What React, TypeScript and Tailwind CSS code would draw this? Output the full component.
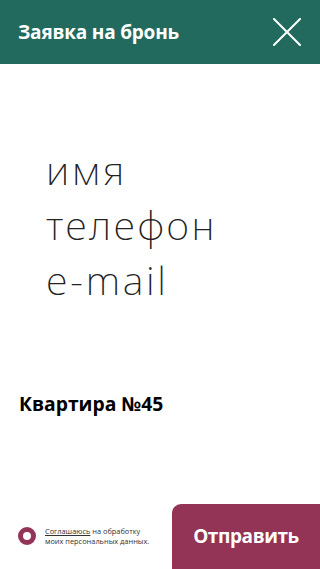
import React from "react";

export default function App() {
  return (
    <div className="w-[320px] h-[569px] bg-white flex flex-col overflow-hidden" style={{ fontFamily: '"Open Sans", "Noto Sans", sans-serif' }}>
      <header className="h-[64px] bg-[#236a5e] flex items-center justify-between pl-[18px] pr-[19px] shrink-0">
        <h1 className="text-white text-[19px] font-bold tracking-[-0.2px]">Заявка на бронь</h1>
        <svg width="28" height="28" viewBox="0 0 28 28" className="block">
          <path d="M1 1 L27 27 M27 1 L1 27" stroke="white" strokeWidth="2" strokeLinecap="square" />
        </svg>
      </header>
      <div className="flex flex-col pl-[46px] pt-[79px] text-[#222] text-[39.5px] leading-[55px] tracking-[2.7px]" style={{ fontFamily: '"Noto Sans", sans-serif', fontWeight: 200 }}>
        <div>имя</div>
        <div>телефон</div>
        <div>e-mail</div>
      </div>
      <div className="pl-[19px] pt-[84px] text-[19.3px] font-bold text-black leading-[24px]">Квартира №45</div>
      <div className="mt-auto flex items-end justify-between">
        <div className="flex items-center gap-[9px] pl-[18px] pb-[23px]">
          <div className="w-[18px] h-[18px] rounded-full border-[5px] border-[#933355] shrink-0" />
          <div className="text-[7.4px] leading-[10px] text-[#333]">
            <span className="underline">Соглашаюсь</span> на обработку<br />моих персональных данных.
          </div>
        </div>
        <button className="w-[148px] h-[65px] bg-[#933355] rounded-tl-[9px] text-white text-[19px] font-bold tracking-[-0.4px] flex items-center justify-center">Отправить</button>
      </div>
    </div>
  );
}
